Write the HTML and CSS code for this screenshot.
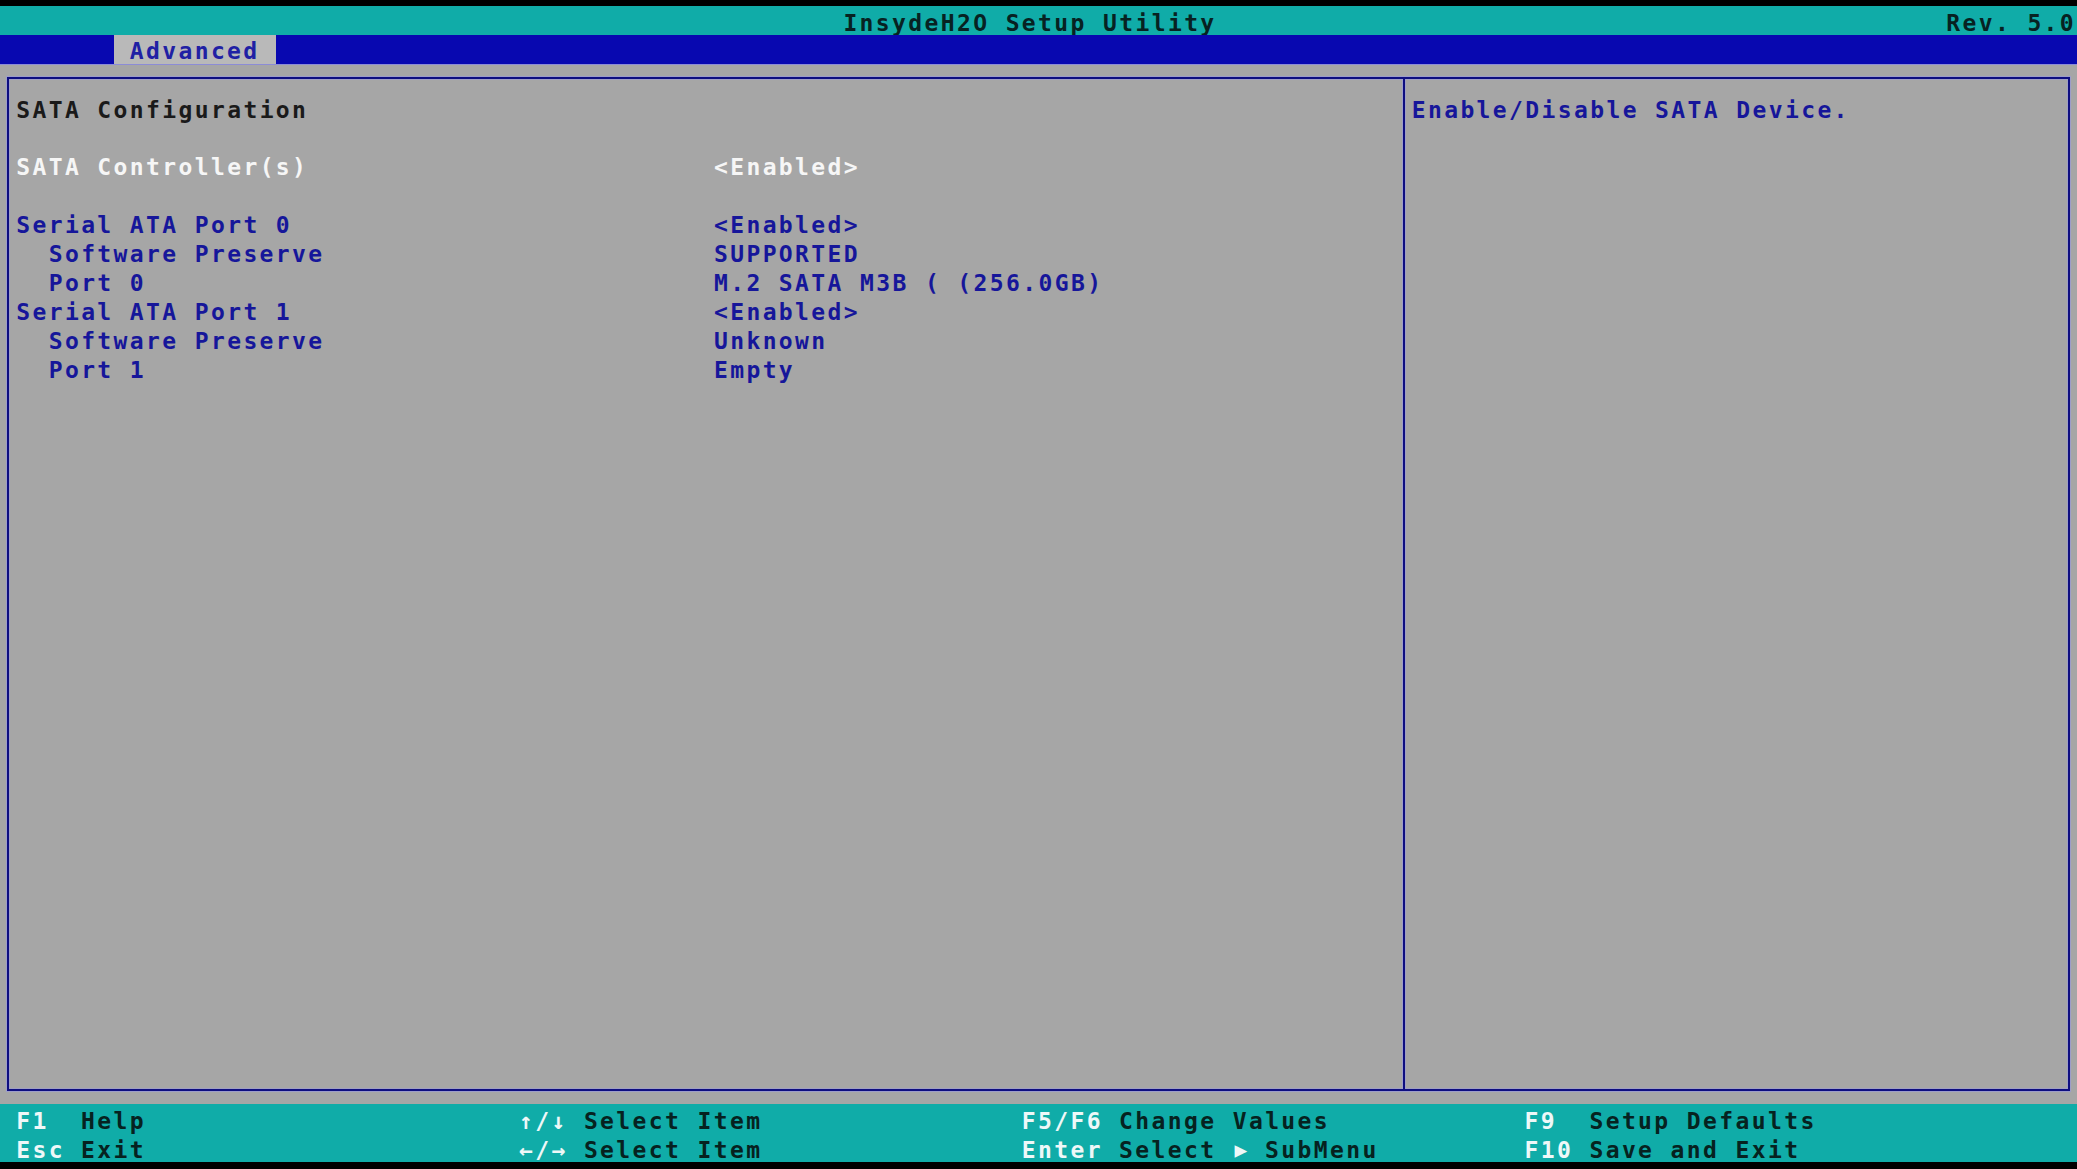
FILE: index.html
```html
<!DOCTYPE html>
<html lang="en">
<head>
<meta charset="utf-8">
<title>InsydeH2O Setup Utility</title>
<link rel="stylesheet" href="styles.css">
</head>
<body>
<div class="screen">
  <header class="row titlebar">
    <span class="t-title">InsydeH2O Setup Utility</span>
    <span class="t-rev">Rev. 5.0</span>
  </header>
  <nav class="row tabbar">
    <span class="tab">Advanced</span>
  </nav>
  <main class="frame">
    <section class="pane-left">
      <div class="line head">SATA Configuration</div>
      <div class="line"></div>
      <div class="line item sel"><span class="lbl">SATA Controller(s)</span><span class="val">&lt;Enabled&gt;</span></div>
      <div class="line"></div>
      <div class="line item"><span class="lbl">Serial ATA Port 0</span><span class="val">&lt;Enabled&gt;</span></div>
      <div class="line item"><span class="lbl ind">Software Preserve</span><span class="val">SUPPORTED</span></div>
      <div class="line item"><span class="lbl ind">Port 0</span><span class="val">M.2 SATA M3B ( (256.0GB)</span></div>
      <div class="line item"><span class="lbl">Serial ATA Port 1</span><span class="val">&lt;Enabled&gt;</span></div>
      <div class="line item"><span class="lbl ind">Software Preserve</span><span class="val">Unknown</span></div>
      <div class="line item"><span class="lbl ind">Port 1</span><span class="val">Empty</span></div>
    </section>
    <aside class="pane-right">
      <div class="line help">Enable/Disable SATA Device.</div>
    </aside>
  </main>
  <footer class="keys">
    <div class="row">
      <span class="k c1 w2">F1</span>
      <span class="d c5 w4">Help</span>
      <span class="k c32 w3">↑/↓</span>
      <span class="d c36 w11">Select Item</span>
      <span class="k c63 w5">F5/F6</span>
      <span class="d c69 w13">Change Values</span>
      <span class="k c94 w2">F9</span>
      <span class="d c98 w14">Setup Defaults</span>
    </div>
    <div class="row">
      <span class="k c1 w3">Esc</span>
      <span class="d c5 w4">Exit</span>
      <span class="k c32 w3">←/→</span>
      <span class="d c36 w11">Select Item</span>
      <span class="k c63 w5">Enter</span>
      <span class="d c69 w6">Select</span>
      <span class="k c76 w1 tri">▶</span>
      <span class="d c78 w7">SubMenu</span>
      <span class="k c94 w3">F10</span>
      <span class="d c98 w13">Save and Exit</span>
    </div>
  </footer>
</div>
</body>
</html>
```
FILE: styles.css
```css
:root {
  --cw: 16.2266px;
  --rh: 28.9px;
  --cyan: #10aca8;
  --blue: #0808b0;
  --gray: #a6a6a6;
  --line: #0e0e80;
  --ink-blue: #16169a;
}

* { box-sizing: border-box; }

html, body {
  margin: 0;
  padding: 0;
  background: #000;
}

body {
  width: 2077px;
  height: 1169px;
  overflow: hidden;
  font-family: "DejaVu Sans Mono", "Liberation Mono", monospace;
  font-weight: bold;
  font-size: 23px;
  letter-spacing: 2.38px;
}

.screen {
  height: 1169px;
  display: flex;
  flex-direction: column;
  background: var(--gray);
  border-top: 6px solid #000;
  border-bottom: 7px solid #000;
}

.row {
  display: grid;
  grid-template-columns: repeat(128, var(--cw));
  height: var(--rh);
  line-height: var(--rh);
  padding-top: 3px;
  white-space: pre;
}

.row > span { overflow: visible; }

.titlebar {
  background: var(--cyan);
  color: #072222;
}
.t-title { grid-column: 53 / span 23; }
.t-rev { grid-column: 121 / span 8; }

.tabbar {
  background: var(--blue);
  box-shadow: 0 1px 0 #8c8cd6;
  padding-top: 0;
  line-height: var(--rh);
}
.tab {
  grid-column: 8 / span 10;
  background: #b9b9b9;
  color: #2020a4;
  padding-left: var(--cw);
  padding-top: 4px;
  line-height: calc(var(--rh) - 4px);
}

.frame {
  flex: 1;
  margin: 13.45px 7px 13.45px 7.11px;
  border: 2px solid var(--line);
  box-shadow: 0 0 0 1px rgba(150, 150, 230, 0.55), inset 0 0 0 1px rgba(150, 150, 230, 0.45);
  display: grid;
  grid-template-columns: 1393.5px 1fr;
}

.pane-left {
  padding: 13.45px 0 0 7.12px;
}

.pane-right {
  border-left: 2px solid var(--line);
  box-shadow: -1px 0 0 rgba(150, 150, 230, 0.55), inset 1px 0 0 rgba(150, 150, 230, 0.45);
  padding: 13.45px 0 0 7.1px;
}

.line {
  height: var(--rh);
  line-height: var(--rh);
  padding-top: 3px;
  white-space: pre;
}

.item {
  display: grid;
  grid-template-columns: calc(43 * var(--cw)) 1fr;
  color: var(--ink-blue);
}

.ind { padding-left: calc(2 * var(--cw)); }

.head { color: #1a1a1a; }
.sel { color: #f6f6f6; }
.help { color: var(--ink-blue); }

.keys {
  background: var(--cyan);
}
.k { color: #eef8f8; }
.d { color: #062220; }
.tri { font-size: 21px; letter-spacing: 0; text-align: center; }

.c1 { grid-column-start: 2; }
.c5 { grid-column-start: 6; }
.c32 { grid-column-start: 33; }
.c36 { grid-column-start: 37; }
.c63 { grid-column-start: 64; }
.c69 { grid-column-start: 70; }
.c76 { grid-column-start: 77; }
.c78 { grid-column-start: 79; }
.c94 { grid-column-start: 95; }
.c98 { grid-column-start: 99; }

.w1 { grid-column-end: span 1; }
.w2 { grid-column-end: span 2; }
.w3 { grid-column-end: span 3; }
.w4 { grid-column-end: span 4; }
.w5 { grid-column-end: span 5; }
.w6 { grid-column-end: span 6; }
.w7 { grid-column-end: span 7; }
.w11 { grid-column-end: span 11; }
.w13 { grid-column-end: span 13; }
.w14 { grid-column-end: span 14; }
```
